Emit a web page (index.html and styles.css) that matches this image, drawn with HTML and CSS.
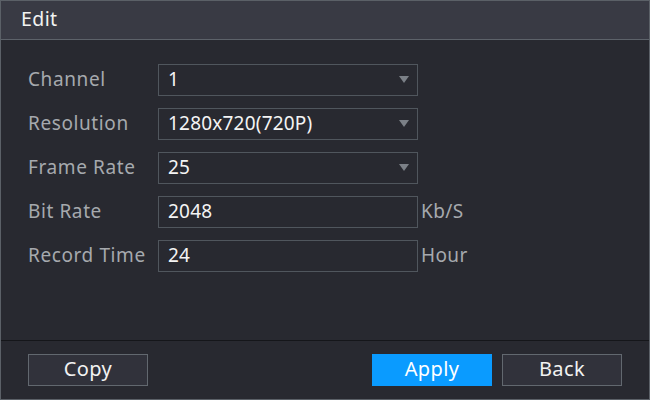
FILE: index.html
```html
<!DOCTYPE html>
<html>
<head>
<meta charset="utf-8">
<link rel="stylesheet" href="styles.css">
</head>
<body>
<div class="dialog">
  <div class="header">Edit</div>
  <div class="content">
    <div class="row">
      <div class="label">Channel</div>
      <div class="field select"><span>1</span><span class="arrow"></span></div>
    </div>
    <div class="row">
      <div class="label">Resolution</div>
      <div class="field select"><span>1280x720(720P)</span><span class="arrow"></span></div>
    </div>
    <div class="row">
      <div class="label">Frame Rate</div>
      <div class="field select"><span>25</span><span class="arrow"></span></div>
    </div>
    <div class="row">
      <div class="label">Bit Rate</div>
      <div class="field"><span>2048</span></div>
      <div class="unit">Kb/S</div>
    </div>
    <div class="row">
      <div class="label">Record Time</div>
      <div class="field"><span>24</span></div>
      <div class="unit">Hour</div>
    </div>
  </div>
  <div class="footer">
    <button class="btn">Copy</button>
    <div class="spacer"></div>
    <button class="btn primary">Apply</button>
    <button class="btn">Back</button>
  </div>
</div>
</body>
</html>
```
FILE: styles.css
```css
html, body {
  margin: 0;
  padding: 0;
  background: #282930;
}
.dialog {
  width: 650px;
  height: 400px;
  box-sizing: border-box;
  border: 1px solid #5b6067;
  background: #282930;
  display: flex;
  flex-direction: column;
  font-family: "Noto Sans", "Open Sans", sans-serif;
  font-size: 19px;
}
.header {
  height: 38px;
  border-bottom: 1px solid #5d626a;
  background: #393a44;
  color: #f2f2f2;
  padding-left: 20px;
  font-size: 19.5px;
  line-height: 36px;
  letter-spacing: 0.4px;
}
.content {
  flex: 1;
  padding: 24px 0 0 27px;
  display: flex;
  flex-direction: column;
  gap: 12px;
}
.row {
  display: flex;
  align-items: center;
  height: 32px;
}
.label {
  width: 130px;
  color: #a6a9ae;
  letter-spacing: 0.6px;
  line-height: 28px;
  padding-bottom: 3px;
}
.field {
  width: 260px;
  height: 32px;
  box-sizing: border-box;
  border: 1px solid #50565d;
  display: flex;
  align-items: center;
  padding-left: 9px;
  padding-bottom: 2px;
  color: #f4f4f4;
  letter-spacing: 0.2px;
  position: relative;
}
.arrow {
  position: absolute;
  right: 8px;
  top: 11px;
  width: 0;
  height: 0;
  border-left: 5px solid transparent;
  border-right: 5px solid transparent;
  border-top: 7px solid #7b8087;
}
.unit {
  margin-left: 3px;
  color: #a6a9ae;
  letter-spacing: 0.4px;
  padding-bottom: 3px;
}
.footer {
  height: 59px;
  border-top: 1px solid #15161a;
  display: flex;
  align-items: flex-start;
  padding: 13px 27px 0 27px;
  box-sizing: border-box;
  gap: 10px;
}
.spacer {
  flex: 1;
}
.btn {
  width: 120px;
  height: 32px;
  box-sizing: border-box;
  border: 1px solid #62686f;
  background: #31323b;
  color: #f2f2f2;
  font-family: "Noto Sans", "Open Sans", sans-serif;
  font-size: 20px;
  letter-spacing: 0.4px;
  padding: 0 0 3px 0;
}
.btn.primary {
  background: #0a9bff;
  border-color: #0a9bff;
  color: #ffffff;
}
```
